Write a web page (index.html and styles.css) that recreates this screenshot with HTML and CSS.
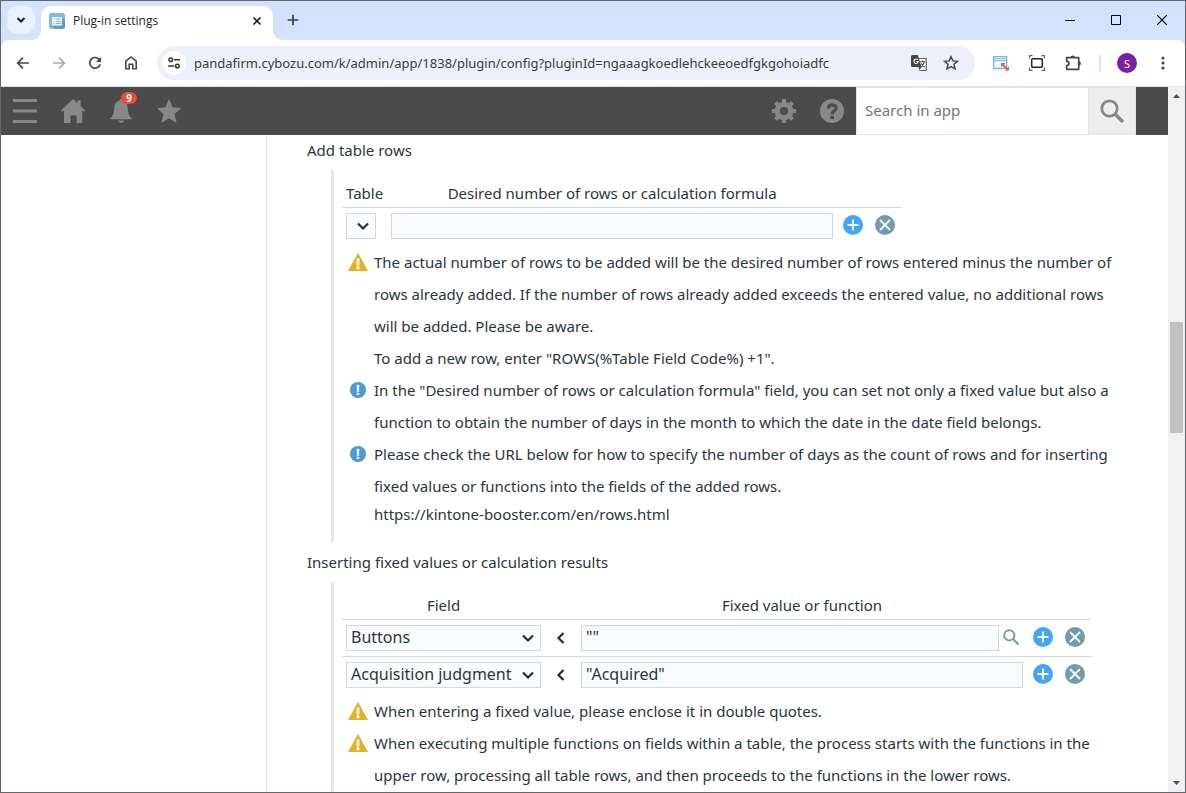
FILE: index.html
```html
<!DOCTYPE html>
<html lang="en">
<head>
<meta charset="utf-8">
<title>Plug-in settings</title>
<link rel="stylesheet" href="styles.css">
</head>
<body>
<svg class="defs" width="0" height="0" aria-hidden="true">
  <symbol id="plus" viewBox="0 0 20 20"><circle cx="10" cy="10" r="10" fill="#42a5f5"/><path d="M10 4.500v11M4.500 10h11" stroke="#fff" stroke-width="1.800"/></symbol>
  <symbol id="cross" viewBox="0 0 20 20"><circle cx="10" cy="10" r="10" fill="#739bac"/><path d="M5 5l10 10M15 5L5 15" stroke="#fff" stroke-width="1.800"/></symbol>
  <symbol id="warn" viewBox="0 0 20 20"><path d="M10 .8L20 19H0z" fill="#e2b227"/><path d="M8.600 6.500h2.800v7H8.600zM8.600 14.600h2.800v2.600H8.600z" fill="#fff"/><path d="M9.700 7.400h.7v5.600h-.7z" fill="#efd68c"/></symbol>
  <symbol id="info" viewBox="0 0 20 20"><circle cx="10" cy="10" r="8" fill="#4c9bd6"/><path d="M8.800 4.800h2.400v7H8.800zM8.800 12.800h2.400v2.300H8.800z" fill="#fff"/><path d="M9.700 5.600h.6v5.600h-.6z" fill="#a9cfeb"/></symbol>
  <symbol id="chev" viewBox="0 0 14 14"><path d="M2 4.500l5 5 5-5" fill="none" stroke="#222f38" stroke-width="2.200"/></symbol>
  <symbol id="less" viewBox="0 0 14 14"><path d="M9.500 2L4.500 7l5 5" fill="none" stroke="#222f38" stroke-width="2.200"/></symbol>
  <symbol id="mag" viewBox="0 0 24 24"><circle cx="9.500" cy="9.500" r="7.700" fill="none" stroke="currentColor" stroke-width="2.800"/><path d="M15 15l8 8" stroke="currentColor" stroke-width="3.400"/></symbol>
</svg>
<div class="window">
  <div class="tabstrip">
    <button class="tab-search" aria-label="Search tabs"><svg width="10" height="10" viewBox="0 0 10 10"><path d="M1.500 3L5 6.500 8.500 3" fill="none" stroke="#1f1f1f" stroke-width="2"/></svg></button>
    <div class="tab">
      <svg width="16" height="16" viewBox="0 0 16 16"><rect width="16" height="16" rx="2.500" fill="#7dbbe0"/><path d="M13 4l3 3v7a2 2 0 0 1-2 2H6l-3-4z" fill="#5c9cc2"/><rect x="3" y="4" width="10" height="8.500" rx="1" fill="#fff"/><path d="M4.200 6h1.300M6.500 6h5.500M4.200 8.300h1.300M6.500 8.300h5.500M4.200 10.600h1.300M6.500 10.600h5.500" stroke="#6ba9ce" stroke-width="1"/></svg>
      <span class="tab-title">Plug-in settings</span>
      <button class="tab-close" aria-label="Close tab"><svg width="10" height="10" viewBox="0 0 10 10"><path d="M1.500 1.500l7 7M8.500 1.500l-7 7" stroke="#1f1f1f" stroke-width="1.700"/></svg></button>
    </div>
    <button class="new-tab" aria-label="New tab"><svg width="12" height="12" viewBox="0 0 12 12"><path d="M6 .7v10.600M.7 6h10.600" stroke="#3c4043" stroke-width="1.700"/></svg></button>
    <div class="controls">
      <button aria-label="Minimize"><svg width="10" height="10" viewBox="0 0 10 10"><path d="M0 5.500h10" stroke="#000"/></svg></button>
      <button aria-label="Maximize"><svg width="10" height="10" viewBox="0 0 10 10"><path d="M.5.5h9v9h-9z" fill="none" stroke="#000"/></svg></button>
      <button aria-label="Close"><svg width="10" height="10" viewBox="0 0 10 10"><path d="M0 0l10 10M10 0L0 10" stroke="#000" stroke-width="1.200"/></svg></button>
    </div>
  </div>
  <div class="toolbar">
    <button class="tool" aria-label="Back"><svg width="16" height="16" viewBox="0 0 16 16"><path d="M14 8H3M8 2.700L2.700 8 8 13.300" fill="none" stroke="#474747" stroke-width="1.700"/></svg></button>
    <button class="tool" aria-label="Forward"><svg width="16" height="16" viewBox="0 0 16 16"><path d="M2 8h11M8 2.700L13.300 8 8 13.300" fill="none" stroke="#ababab" stroke-width="1.700"/></svg></button>
    <button class="tool" aria-label="Reload"><svg width="16" height="16" viewBox="0 0 16 16"><path d="M12.600 5A5.300 5.300 0 1 0 13.200 9.200" fill="none" stroke="#474747" stroke-width="1.700"/><path d="M14 2v5H9z" fill="#474747"/></svg></button>
    <button class="tool" aria-label="Home"><svg width="16" height="16" viewBox="0 0 16 16"><path d="M2.800 6.200L8 2l5.200 4.200v7.600H9.800V9.200H6.200v4.600H2.800z" fill="none" stroke="#474747" stroke-width="1.600"/></svg></button>
    <div class="omnibox">
      <button class="site-info" aria-label="View site information"><svg width="14" height="14" viewBox="0 0 14 14"><circle cx="3.800" cy="3.800" r="1.800" fill="none" stroke="#333" stroke-width="1.500"/><circle cx="10.400" cy="10" r="1.800" fill="none" stroke="#333" stroke-width="1.500"/><path d="M7 3.800h6M1.200 10h6" stroke="#333" stroke-width="1.600"/></svg></button>
      <input class="url" type="text" aria-label="Address" value="pandafirm.cybozu.com/k/admin/app/1838/plugin/config?pluginId=ngaaagkoedlehckeeoedfgkgohoiadfc">
      <button class="omni-btn" aria-label="Translate"><svg width="18" height="18" viewBox="0 0 18 18"><path d="M8 4.500h8.200v12H9.500" fill="#fff" stroke="#5f6368" stroke-width="1.200"/><path d="M2.500 1h5.300l3.700 12H2.500A1.500 1.500 0 0 1 1 11.500V2.500A1.500 1.500 0 0 1 2.500 1z" fill="#474747"/><path d="M7.800 5.800a2.200 2.200 0 1 0 .5 1.700H6.300" fill="none" stroke="#fff" stroke-width="1.100"/><path d="M10 7.800h5.300M12.700 6.400v1.400M14.300 7.800c-.5 2-1.700 3.600-3.300 5M11.300 9.500c.7 1.500 1.800 2.800 3.500 3.800" fill="none" stroke="#474747" stroke-width="1.100"/><path d="M8.500 13h3l-2 3.300z" fill="#474747"/></svg></button>
      <button class="omni-btn" aria-label="Bookmark"><svg width="16" height="16" viewBox="0 0 16 16"><path d="M8 1.700l1.900 4.200 4.500.4-3.400 3 1 4.500L8 11.500l-4 2.300 1-4.500-3.400-3 4.500-.4z" fill="none" stroke="#474747" stroke-width="1.500"/></svg></button>
    </div>
    <div class="extensions">
      <button class="tool" aria-label="Window extension"><svg width="16" height="16" viewBox="0 0 16 16"><path d="M.7 1.700h13v11.800H.7z" fill="#f2faff" stroke="#72b9e6" stroke-width="1.300"/><path d="M.7 3.700h13M.7 5.700h13" stroke="#72b9e6"/><path d="M8 8h4.500L8 12.300zM16 15.500h-4.500l4.500-4.300z" fill="#f0604d"/><path d="M9.500 9.500l5 4.700" stroke="#f0604d" stroke-width="2"/></svg></button>
      <button class="tool" aria-label="Capture extension"><svg width="16" height="16" viewBox="0 0 16 16"><rect x="2.700" y="3.700" width="10.600" height="8.600" rx="1" fill="none" stroke="#222" stroke-width="1.500"/><path d="M.5 3.500V.7h3M12.500.7h3v2.800M15.500 12.500v2.800h-3M3.500 15.300h-3v-2.800" fill="none" stroke="#3f8040" stroke-width="1.200"/></svg></button>
      <button class="tool" aria-label="Extensions"><svg width="18" height="18" viewBox="0 0 18 18"><path d="M2.700 3.700h12v11.600h-12v-3.600a2.200 2.200 0 0 0 0-4.400z" fill="none" stroke="#474747" stroke-width="1.700" stroke-linejoin="round"/><path d="M6.500 3.700a2.200 2.200 0 0 1 4.400 0zM14.700 7.300a2.200 2.200 0 0 1 0 4.400z" fill="#474747"/></svg></button>
    </div>
    <span class="sep"></span>
    <button class="avatar" aria-label="Profile">S</button>
    <button class="tool" aria-label="Menu"><svg width="4" height="16" viewBox="0 0 4 16"><circle cx="2" cy="3" r="1.600" fill="#474747"/><circle cx="2" cy="8" r="1.600" fill="#474747"/><circle cx="2" cy="13" r="1.600" fill="#474747"/></svg></button>
  </div>
  <div class="viewport">
    <div class="page">
      <header class="app-header">
        <button class="nav" aria-label="Menu"><svg width="24" height="24" viewBox="0 0 24 24"><path d="M0 1.500h24M0 12h24M0 22.500h24" stroke="#888" stroke-width="3"/></svg></button>
        <button class="nav" aria-label="Portal"><svg width="24" height="24" viewBox="0 0 24 24"><path d="M12 0l4.500 4.200V1.300h3.200v6L24 11.600l-1.200 1.200-1.600-1.500V24h-5.700v-7.500h-6V24H3V11.300l-1.800 1.500L0 11.600z" fill="#888"/></svg></button>
        <button class="nav" aria-label="Notifications, 9 new"><svg width="24" height="24" viewBox="0 0 24 24"><path d="M12 0c1.300 0 1.600 1 1.500 1.700C17.500 2.500 18.500 6 18.700 9c.3 5 1.300 8.300 4.800 11.300H.5C4 17.300 5 14 5.300 9c.2-3 1.200-6.500 5.200-7.300C10.400 1 10.700 0 12 0zM9 21.500h6c-.6 3-5.400 3-6 0z" fill="#888"/></svg><span class="badge">9</span></button>
        <button class="nav" aria-label="Favorites"><svg width="24" height="24" viewBox="0 0 24 24"><path d="M12 0l3.500 8.300L24 9.200l-6.500 5.800L19.600 24 12 19.300 4.400 24l2.100-9L0 9.200l8.500-.9z" fill="#888"/></svg></button>
        <span class="spacer"></span>
        <button class="nav" aria-label="Settings"><svg width="24" height="24" viewBox="0 0 24 24"><circle cx="12" cy="12" r="6.700" fill="none" stroke="#888" stroke-width="5.200"/><path d="M12 0v4M12 20v4M0 12h4M20 12h4M3.500 3.500l3 3M17.500 17.500l3 3M20.500 3.500l-3 3M6.500 17.500l-3 3" stroke="#888" stroke-width="4"/></svg></button>
        <button class="nav" aria-label="Help"><svg width="24" height="24" viewBox="0 0 24 24"><circle cx="12" cy="12" r="12" fill="#888"/><path d="M8.500 9.500c0-4.800 7.600-4.500 7.600-.6 0 2.800-3.900 2.800-3.900 6.300" fill="none" stroke="#4b4b4b" stroke-width="3.200"/><path d="M10.400 16.800h3.600v3.200h-3.600z" fill="#4b4b4b"/></svg></button>
        <input class="search-box" type="text" placeholder="Search in app" aria-label="Search in app">
        <button class="search-btn" aria-label="Search"><svg width="24" height="24"><use href="#mag"/></svg></button>
      </header>
      <div class="columns">
        <aside class="sidebar"></aside>
        <main class="content">
          <h2>Add table rows</h2>
          <section class="block">
            <table class="grid">
              <thead><tr><th>Table</th><th>Desired number of rows or calculation formula</th><td></td></tr></thead>
              <tbody>
                <tr>
                  <td><span class="select small"><select aria-label="Table"><option></option></select><svg width="14" height="14"><use href="#chev"/></svg></span></td>
                  <td><span class="entry"><input type="text" aria-label="Desired number of rows or calculation formula"></span></td>
                  <td class="actions"><span><button aria-label="Add row"><svg width="20" height="20"><use href="#plus"/></svg></button><button aria-label="Delete row"><svg width="20" height="20"><use href="#cross"/></svg></button></span></td>
                </tr>
              </tbody>
            </table>
            <div class="note"><svg width="20" height="20"><use href="#warn"/></svg><p>The actual number of rows to be added will be the desired number of rows entered minus the number of rows already added. If the number of rows already added exceeds the entered value, no additional rows will be added. Please be aware.<br>To add a new row, enter "ROWS(%Table Field Code%) +1".</p></div>
            <div class="note"><svg width="20" height="20"><use href="#info"/></svg><p>In the "Desired number of rows or calculation formula" field, you can set not only a fixed value but also a function to obtain the number of days in the month to which the date in the date field belongs.</p></div>
            <div class="note"><svg width="20" height="20"><use href="#info"/></svg><p>Please check the URL below for how to specify the number of days as the count of rows and for inserting fixed values or functions into the fields of the added rows.</p></div>
            <a class="link" href="https://kintone-booster.com/en/rows.html">https://kintone-booster.com/en/rows.html</a>
          </section>
          <h2>Inserting fixed values or calculation results</h2>
          <section class="block">
            <table class="grid">
              <thead><tr><th>Field</th><td></td><th>Fixed value or function</th><td></td></tr></thead>
              <tbody>
                <tr>
                  <td><span class="select"><select aria-label="Field, row 1"><option>Buttons</option></select><svg width="14" height="14"><use href="#chev"/></svg></span></td>
                  <td class="arrow"><svg width="14" height="14"><use href="#less"/></svg></td>
                  <td><span class="entry"><input type="text" aria-label="Fixed value or function, row 1" value='""'><button aria-label="Find function"><svg width="16" height="16"><use href="#mag"/></svg></button></span></td>
                  <td class="actions"><span><button aria-label="Add row"><svg width="20" height="20"><use href="#plus"/></svg></button><button aria-label="Delete row"><svg width="20" height="20"><use href="#cross"/></svg></button></span></td>
                </tr>
                <tr>
                  <td><span class="select"><select aria-label="Field, row 2"><option>Acquisition judgment</option></select><svg width="14" height="14"><use href="#chev"/></svg></span></td>
                  <td class="arrow"><svg width="14" height="14"><use href="#less"/></svg></td>
                  <td><span class="entry"><input type="text" aria-label="Fixed value or function, row 2" value='"Acquired"'></span></td>
                  <td class="actions"><span><button aria-label="Add row"><svg width="20" height="20"><use href="#plus"/></svg></button><button aria-label="Delete row"><svg width="20" height="20"><use href="#cross"/></svg></button></span></td>
                </tr>
              </tbody>
            </table>
            <div class="note"><svg width="20" height="20"><use href="#warn"/></svg><p>When entering a fixed value, please enclose it in double quotes.</p></div>
            <div class="note"><svg width="20" height="20"><use href="#warn"/></svg><p>When executing multiple functions on fields within a table, the process starts with the functions in the upper row, processing all table rows, and then proceeds to the functions in the lower rows.</p></div>
          </section>
        </main>
      </div>
    </div>
    <div class="scrollbar" aria-hidden="true">
      <svg width="17" height="17" viewBox="0 0 17 17"><path d="M5 11l3.500-4L12 11z" fill="#505050"/></svg>
      <div class="track"><div class="thumb"></div></div>
      <svg width="17" height="17" viewBox="0 0 17 17"><path d="M5 6l3.500 4L12 6z" fill="#505050"/></svg>
    </div>
  </div>
</div>
</body>
</html>
```
FILE: styles.css
```css
* { box-sizing: border-box; }
body { margin: 0; font-family: "Noto Sans", sans-serif; font-size: 15px; color: #2a363e; }
button { margin: 0; padding: 0; border: 0; background: none; font: inherit; color: inherit; display: flex; align-items: center; justify-content: center; }
svg { display: block; flex: none; }
h2, p { margin: 0; font-size: 15px; font-weight: 400; }
.defs { position: absolute; }

.window { height: 100vh; display: flex; flex-direction: column; border: 1px solid #66676b; background: #d3e2fd; overflow: hidden; }

.tabstrip { flex: none; display: flex; align-items: flex-start; height: 39px; padding: 5px 0 0 6px; }
.tab-search { width: 28px; height: 28px; border-radius: 10px; background: #e9f0fe; }
.tab { position: relative; display: flex; align-items: center; width: 232px; height: 34px; margin-left: 6px; padding: 0 10px 5px 8px; gap: 8px; border-radius: 10px 10px 0 0; background: #fff; }
.tab::before, .tab::after { content: ""; position: absolute; bottom: 0; width: 10px; height: 10px; }
.tab::before { left: -10px; background: radial-gradient(circle at 0 0, #d3e2fd 10px, #fff 10px); }
.tab::after { right: -10px; background: radial-gradient(circle at 100% 0, #d3e2fd 10px, #fff 10px); }
.tab-title { flex: 1; font-family: "Open Sans", sans-serif; font-size: 12px; line-height: 20px; color: #1f1f1f; }
.tab-close { width: 12px; height: 20px; }
.new-tab { width: 28px; height: 28px; margin-left: 6px; }
.controls { display: flex; margin-left: auto; }
.controls button { width: 46px; height: 28px; }

.toolbar { flex: none; display: flex; align-items: center; height: 47px; padding: 0 4px; border-bottom: 1px solid #e0e2e6; border-radius: 8px 8px 0 0; background: #fff; }
.tool { width: 36px; height: 32px; flex: none; }
.omnibox { flex: 1; display: flex; align-items: center; height: 34px; margin-left: 8px; padding: 0 8px 0 5px; border-radius: 17px; background: #ebf0fa; }
.site-info { flex: none; width: 24px; height: 24px; border-radius: 12px; background: #fff; }
.url { flex: 1; min-width: 0; height: 24px; margin-left: 8px; padding: 0; border: 0; outline: 0; background: none; font-family: "Noto Sans", sans-serif; font-size: 13px; color: #3a3c40; }
.omni-btn { width: 32px; height: 32px; flex: none; }
.extensions { display: flex; margin-left: 8px; }
.sep { width: 2px; height: 16px; margin: 0 16px 0 8px; background: #d3e2fd; }
.avatar { flex: none; width: 20px; height: 20px; margin-right: 8px; border-radius: 10px; background: #7b1fa2; color: #fff; font-size: 11px; }

.viewport { flex: 1; min-height: 0; display: flex; background: #fff; }
.page { flex: 1; min-width: 0; display: flex; flex-direction: column; overflow: hidden; }
.app-header { flex: none; display: flex; height: 48px; padding-right: 32px; background: #4b4b4b; }
.nav { position: relative; width: 48px; height: 48px; }
.badge { position: absolute; top: 5px; left: 24px; width: 16px; height: 12px; border-radius: 6px; background: #e74c3c; color: #fff; font-size: 10px; font-weight: 700; line-height: 12px; text-align: center; }
.spacer { flex: 1; }
.search-box { width: 233px; height: 48px; padding: 0 8px 2px; border: 1px solid #e3e7e8; border-radius: 0; outline: 0; background: #fff; font-family: "Noto Sans", sans-serif; font-size: 15px; color: #2a363e; }
.search-box::placeholder { color: #757575; opacity: 1; }
.search-btn { width: 47px; height: 48px; border: 1px solid #e3e7e8; border-left: 0; background: #eee; color: #888; }

.columns { flex: 1; min-height: 0; display: flex; overflow: hidden; }
.sidebar { flex: none; width: 266px; border-right: 1px solid #e3e7e8; }
.content { flex: 1; min-width: 0; padding: 0 49px 0 40px; }
.content h2 { margin-bottom: 5px; line-height: 30px; }
.block { margin: 0 0 5px 24px; padding: 12px 0 16px 8px; border-left: 3px solid #e3e7e8; }
.grid { border-collapse: separate; border-spacing: 0; margin-bottom: 1px; }
.grid th, .grid td { padding: 0 4px; font-weight: 400; }
.grid thead th, .grid thead td { height: 26px; padding-bottom: 2px; border-bottom: 1px solid #ced9de; line-height: 23px; text-align: center; }
.grid tbody td { height: 37px; border-bottom: 1px solid #ced9de; }
.grid tbody tr:last-child td { border-bottom-color: transparent; }
.select { display: grid; width: 195px; height: 26px; align-items: center; }
.select.small { width: 30px; }
.select select { grid-area: 1 / 1; width: 100%; height: 26px; margin: 0; padding: 0 4px 2px; appearance: none; border: 1px solid #ced9de; border-radius: 0; background: #f9fbfd; color: #2a363e; font-family: "Noto Sans", sans-serif; font-size: 16px; line-height: 22px; }
.select svg { grid-area: 1 / 1; justify-self: end; margin-right: 6px; pointer-events: none; }
.entry { display: flex; width: 442px; height: 26px; }
.entry input { flex: 1; min-width: 0; height: 26px; padding: 0 4px 2px; border: 1px solid #ced9de; border-radius: 0; outline: 0; background: #f9fbfd; color: #2a363e; font-family: "Noto Sans", sans-serif; font-size: 16px; }
.entry button { width: 24px; height: 26px; padding-bottom: 2px; color: #739bac; }
.grid .arrow { width: 32px; padding: 0 9px; }
.grid .actions { padding: 0; }
.actions span { display: flex; }
.actions button { width: 32px; height: 26px; padding-bottom: 2px; }
.note { display: flex; gap: 6px; padding-left: 6px; line-height: 32px; }
.note svg { margin-top: 6px; }
.link { display: block; padding-left: 32px; line-height: 24px; color: inherit; text-decoration: none; }

.scrollbar { flex: none; display: flex; flex-direction: column; width: 17px; background: #f1f1f1; }
.track { flex: 1; display: flex; flex-direction: column; padding: 0 2px; }
.track::before { content: ""; flex: 218; }
.thumb { flex: 111; background: #c1c1c1; }
.track::after { content: ""; flex: 342; }
```
